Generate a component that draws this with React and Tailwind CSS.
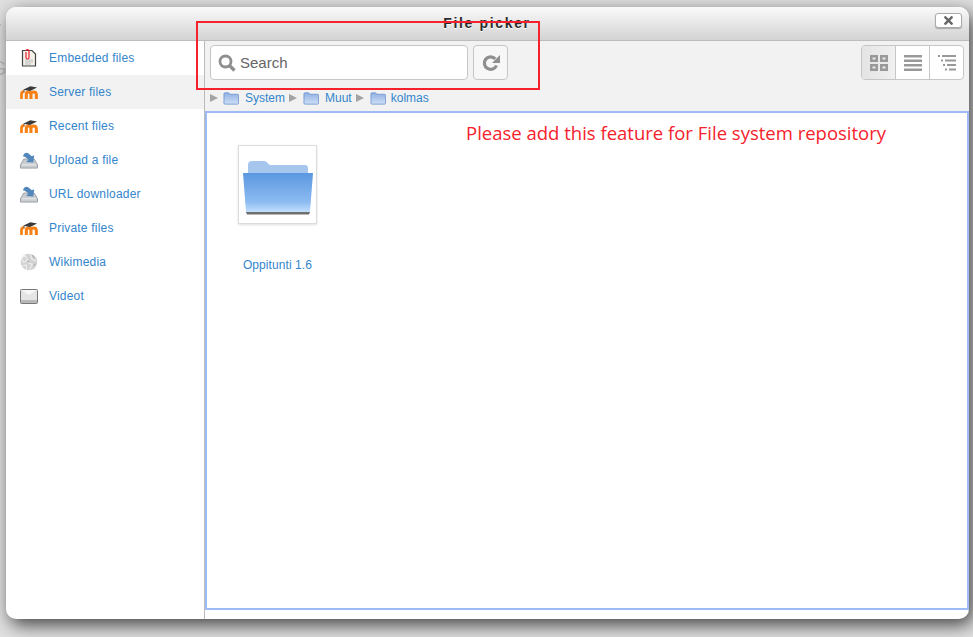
import React from "react";
import { FaTimes } from "react-icons/fa";

const MoodleIcon = () => (
  <svg width="18" height="13" viewBox="0 0 20 14.5">
    <path d="M1.6 14.5V9Q1.6 6.2 5 6" fill="none" stroke="#f98012" strokeWidth="3" />
    <path d="M7 14.5V9.5Q7 6.6 9.6 6.6Q12.2 6.6 12.2 9.5V14.5M12.2 9.5Q12.2 6.6 15 6.6Q18.2 6.6 18.2 9.8V14.5" fill="none" stroke="#f98012" strokeWidth="3.4" />
    <path d="M3.5 4.2L11.5 0.3L19 1.6L11.2 5.6Z" fill="#3a3a3a" />
    <path d="M4.4 4.2V7" stroke="#666" strokeWidth="1" />
  </svg>
);

const EmbeddedIcon = () => (
  <svg width="16" height="18" viewBox="0 0 16 18">
    <path d="M1.5 1.5H11L14.5 5V17H1.5Z" fill="#f4f1ea" stroke="#444" strokeWidth="1.2" />
    <path d="M4 11H12M4 13H12M4 15H10" stroke="#bbb" strokeWidth="1" />
    <path d="M5 3V8.5Q5 10 6.5 10Q8 10 8 8.5V2Q8 .7 6.5 .7Q5 .7 5 2" fill="none" stroke="#e8202a" strokeWidth="1.2" />
  </svg>
);

const UploadIcon = () => (
  <svg width="19" height="17" viewBox="0 0 19 17">
    <path d="M4 7H15L18.5 13V16.5H.5V13Z" fill="#c9ccd0" stroke="#9a9ea3" strokeWidth="1" />
    <path d="M2 13H17" stroke="#eee" strokeWidth="1" />
    <path d="M3 4Q5 -1 9 1L12.5 4L15 3L14 10.5L6.5 10L9 7.5L6.5 5.5Q5 4.5 3 4Z" fill="#5187bb" />
  </svg>
);

const WikiIcon = () => (
  <svg width="18" height="18" viewBox="0 0 19 18">
    <circle cx="9.5" cy="9" r="8.8" fill="#d2d2d2" />
    <path d="M5 1.8L8 7L4 9.5L1.5 6ZM11 .8L12.5 6L17 8M9 10L13 11.5L10 17M3 13L6.5 12L7 17" fill="none" stroke="#ececec" strokeWidth="1.3" />
    <path d="M13 2L15.5 5M8 8L10 9M14 13L16 11" stroke="#a0a0a0" strokeWidth="1" />
  </svg>
);

const VideoIcon = () => (
  <svg width="18" height="15" viewBox="0 0 18 15">
    <rect x="0.5" y="0.5" width="17" height="14" rx="1" fill="#e4e4e4" stroke="#777" />
    <path d="M1 11H17V14H1Z" fill="#b8b8b8" />
    <path d="M1 1L9 6L17 1Z" fill="#f6f6f6" />
  </svg>
);

const FolderSmall = () => (
  <svg width="16" height="13" viewBox="0 0 17 13" className="shrink-0">
    <defs>
      <linearGradient id="fs" x1="0" y1="0" x2="0" y2="1">
        <stop offset="0" stopColor="#8fb0e3" />
        <stop offset="1" stopColor="#cfdff5" />
      </linearGradient>
    </defs>
    <path d="M1 1.5Q1 .5 2 .5H6L7.5 2H15.5Q16.5 2 16.5 3V11.5Q16.5 12.5 15.5 12.5H2Q1 12.5 1 11.5Z" fill="url(#fs)" stroke="#6a8fca" strokeWidth="0.8" />
  </svg>
);

const FolderBig = () => (
  <svg width="70" height="56" viewBox="0 0 70 56">
    <defs>
      <linearGradient id="fb" x1="0" y1="0" x2="0" y2="1">
        <stop offset="0" stopColor="#5b97e0" />
        <stop offset="0.75" stopColor="#8dbcf2" />
        <stop offset="1" stopColor="#c2dffc" />
      </linearGradient>
    </defs>
    <path d="M5 5Q5 1 9 1H21Q24 1 25 3.5Q26 5 28 5H62Q65 5 65 8V14H5Z" fill="#a6c6ee" />
    <path d="M0 13H70L67 52H3Z" fill="url(#fb)" />
    <path d="M3 52H67L66 54.5H4Z" fill="#6e6e6e" />
  </svg>
);

const items = [
  { label: "Embedded files", icon: <EmbeddedIcon /> },
  { label: "Server files", icon: <MoodleIcon />, active: true },
  { label: "Recent files", icon: <MoodleIcon /> },
  { label: "Upload a file", icon: <UploadIcon /> },
  { label: "URL downloader", icon: <UploadIcon /> },
  { label: "Private files", icon: <MoodleIcon /> },
  { label: "Wikimedia", icon: <WikiIcon /> },
  { label: "Videot", icon: <VideoIcon /> },
];

const crumbs = ["System", "Muut", "kolmas"];

function Arrow() {
  return <span className="block h-0 w-0 shrink-0 border-y-[4.5px] border-l-[8px] border-y-transparent border-l-[#a3a3a3]" />;
}

export default function App() {
  return (
    <div className="relative h-[637px] w-[973px] overflow-hidden bg-[#e0e0e0] pl-[6px] pt-[7px] font-['Liberation_Sans',sans-serif]">
      <span className="absolute left-[-5px] top-[14px] text-lg text-[#b5b5b5]">r</span>
      <span className="absolute left-[-9px] top-[54px] text-xl text-[#c0c0c0]">G</span>

      <div className="relative flex h-[612px] w-[963px] flex-col rounded-[10px] bg-white shadow-[4px_6px_18px_rgba(0,0,0,0.7)]">
        <div className="relative flex h-[34px] shrink-0 items-center justify-center rounded-t-[10px] border-b border-[#bdbdbd] bg-gradient-to-b from-[#fafafa] to-[#d3d3d3]">
          <h1 className="ml-[-1px] mt-[-2px] text-sm font-bold tracking-[1.65px] text-[#2b2b2b] [text-shadow:0_1px_0_#fff]">File picker</h1>
          <button className="absolute right-[7px] top-[6px] flex h-[15px] w-[27px] items-center justify-center rounded-[3px] border border-[#aaa] bg-white shadow-[0_1px_1px_rgba(0,0,0,0.25)]">
            <FaTimes className="text-[13px] text-[#666]" />
          </button>
        </div>

        <div className="flex min-h-0 flex-1">
          <nav className="w-[199px] shrink-0 border-r border-[#bbb] pb-[1px]">
            {items.map((item) => (
              <a key={item.label} className={`flex h-[34px] items-center ${item.active ? "bg-[#f2f2f2]" : ""}`}>
                <span className="flex w-[43px] shrink-0 pl-[14px]">
                  <span className="flex w-[18px] justify-center">{item.icon}</span>
                </span>
                <span className="text-xs tracking-[0.2px] text-[#3385cc]">{item.label}</span>
              </a>
            ))}
          </nav>

          <main className="flex min-w-0 flex-1 flex-col pb-[9px]">
            <div className="h-[70px] shrink-0 bg-[#f2f2f2]">
              <div className="flex items-start pl-[5px] pr-[5px] pt-[4px]">
                <div className="flex h-[35px] w-[258px] items-center rounded-[4px] border border-[#c6c6c6] bg-white pl-[7px]">
                  <svg width="18" height="18" viewBox="0 0 18 18" fill="none" stroke="#8f8f8f" className="shrink-0">
                    <circle cx="7.5" cy="7.5" r="5.5" strokeWidth="2.8" />
                    <path d="M11.5 11.5L16.5 16.5" strokeWidth="3.4" />
                  </svg>
                  <span className="ml-[4px] mt-[2px] text-[15px] text-[#666]">Search</span>
                </div>
                <button className="ml-[5px] flex h-[35px] w-[35px] items-center justify-center rounded-[4px] border border-[#c6c6c6] bg-[#f7f7f7]">
                  <svg width="18" height="18" viewBox="0 0 18 18" fill="none">
                    <path d="M14.5 11.5A6.3 6.3 0 1 1 13.3 4.8" stroke="#8f8f8f" strokeWidth="3.2" />
                    <path d="M18 1V9H10Z" fill="#8f8f8f" />
                  </svg>
                </button>
                <div className="ml-auto flex h-[35px] w-[103px] rounded-[4px] border border-[#c6c6c6] bg-white">
                  <span className="flex flex-1 items-center justify-center rounded-l-[4px] border-r border-[#c6c6c6] bg-gradient-to-r from-[#e4e4e4] to-[#f0f0f0]">
                    <svg width="18" height="16" viewBox="0 0 18 16" fill="#999">
                      <path d="M0 0H8V7H0ZM2.5 2.5V4.5H5.5V2.5ZM10 0H18V7H10ZM12.5 2.5V4.5H15.5V2.5ZM0 9H8V16H0ZM2.5 11.5V13.5H5.5V11.5ZM10 9H18V16H10ZM12.5 11.5V13.5H15.5V11.5Z" fillRule="evenodd" />
                    </svg>
                  </span>
                  <span className="flex flex-1 items-center justify-center border-r border-[#c6c6c6]">
                    <svg width="18" height="16" viewBox="0 0 18 16" fill="#999">
                      <path d="M0 0H18V2.5H0ZM0 4.5H18V7H0ZM0 9H18V11.5H0ZM0 13.5H18V16H0Z" />
                    </svg>
                  </span>
                  <span className="flex flex-1 items-center justify-center">
                    <svg width="18" height="16" viewBox="0 0 18 16" fill="#999">
                      <path d="M0 0H2V2H0ZM4 0H18V2H4ZM3 4.5H5V6.5H3ZM7 4.5H18V6.5H7ZM5 9H7V11H5ZM9 9H18V11H9ZM7 13.5H9V15.5H7ZM11 13.5H18V15.5H11Z" />
                    </svg>
                  </span>
                </div>
              </div>
              <div className="mt-[10px] flex items-center pl-[5px] text-xs text-[#3385cc]">
                {crumbs.map((crumb, i) => (
                  <div key={crumb} className="flex items-center">
                    <span className={`flex items-center ${i === 0 ? "mr-[5px]" : "mx-[4px]"}`}><Arrow /></span>
                    <span className={`flex items-center ${i === 0 ? "" : "ml-[2px]"}`}><FolderSmall /></span>
                    <span className={i === 0 ? "ml-[6px]" : i === 1 ? "ml-[6px]" : "ml-[5px]"}>{crumb}</span>
                  </div>
                ))}
              </div>
            </div>

            <div className="flex-1 border-2 border-[#9dbcf5] bg-white pl-[31px] pt-[32px]">
              <div className="w-[79px]">
                <div className="flex h-[79px] w-[79px] justify-center border border-[#dcdcdc] bg-white pt-[14px] shadow-[0_1px_2px_rgba(0,0,0,0.12)]">
                  <FolderBig />
                </div>
                <p className="mt-[33px] whitespace-nowrap text-center text-xs tracking-[0.08px] text-[#3385cc]">Oppitunti 1.6</p>
              </div>
            </div>
          </main>
        </div>
      </div>

      <div className="pointer-events-none absolute left-[196px] top-[21px] h-[69px] w-[344px] border-2 border-[#f5222d]" />
      <p className="absolute left-[466px] top-[119px] font-['Open_Sans',sans-serif] text-[18.5px] text-[#f5222d]">Please add this feature for File system repository</p>
    </div>
  );
}
